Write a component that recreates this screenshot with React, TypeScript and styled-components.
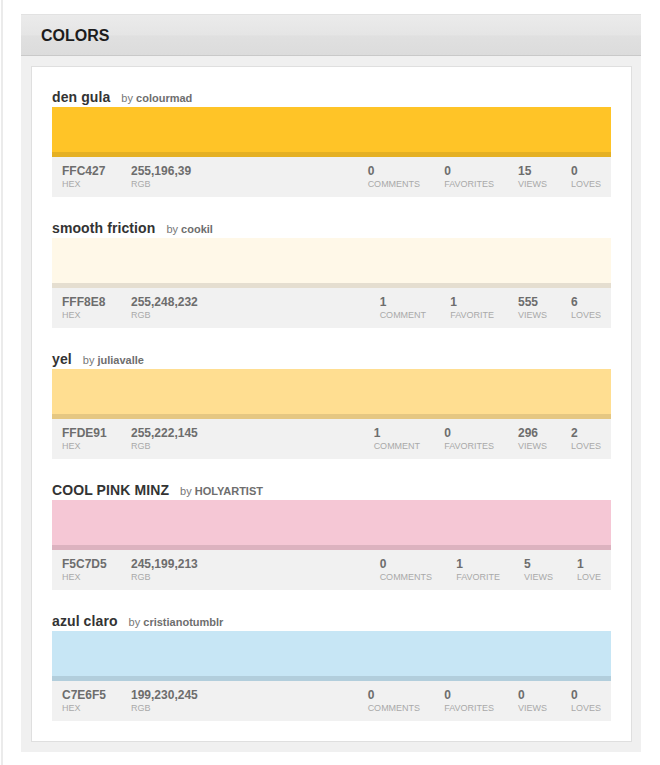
import React from "react";
import styled, { createGlobalStyle } from "styled-components";

const GlobalStyle = createGlobalStyle`
  html, body { margin: 0; padding: 0; background: #fff; }
  body { font-family: "Liberation Sans", Arial, Helvetica, sans-serif; }
`;

const Page = styled.div`
  min-height: 765px;
  box-sizing: border-box;
  padding: 15px 19px 0 21px;
  background: linear-gradient(to right, #fff 1px, #ebebeb 1px, #ebebeb 3px, #fff 3px);
`;

const Panel = styled.section`
  background: #f0f0f0;
  padding-bottom: 10px;
`;

const PanelHeader = styled.header`
  height: 40px;
  line-height: 41px;
  padding-left: 20px;
  border-top: 1px solid #e2e2e2;
  border-bottom: 1px solid #c9c9c9;
  background: linear-gradient(#ebebeb 0%, #e5e5e5 50%, #e0e0e0 52%, #dcdcdc 100%);
  font-size: 16px;
  font-weight: bold;
  color: #1c1c1c;
  margin-top: -1px;
`;

const Card = styled.div`
  margin: 10px 9px 0 10px;
  background: #fff;
  border: 1px solid #dfdfdf;
  padding: 21px 20px 20px 20px;
  display: flex;
  flex-direction: column;
  gap: 22px;
`;

const Entry = styled.article`
  display: flex;
  flex-direction: column;
`;

const TitleRow = styled.div`
  display: flex;
  align-items: baseline;
  gap: 11px;
  height: 18px;
  line-height: 18px;
  margin-bottom: 1px;
`;

const Title = styled.span`
  font-size: 14px;
  font-weight: bold;
  color: #333;
  letter-spacing: 0.1px;
`;

const Author = styled.span`
  font-size: 11px;
  color: #777;
  b { font-weight: bold; color: #6e6e6e; }
`;

const Swatch = styled.div<{ $color: string }>`
  height: 45px;
  background: ${(p) => p.$color};
  border-bottom: 5px solid rgba(0, 0, 0, 0.1);
`;

const Info = styled.div`
  height: 40px;
  box-sizing: border-box;
  background: #f1f1f1;
  padding: 7px 10px 0 10px;
  display: flex;
`;

const Field = styled.div<{ $width?: number }>`
  display: flex;
  flex-direction: column;
  ${(p) => (p.$width ? `width: ${p.$width}px;` : "")}
`;

const Value = styled.span`
  font-size: 12px;
  line-height: 14px;
  font-weight: bold;
  color: #6d6d6d;
`;

const Label = styled.span`
  font-size: 9px;
  line-height: 11px;
  margin-top: 1px;
  text-transform: uppercase;
  color: #a9a9a9;
`;

const Stats = styled.div`
  margin-left: auto;
  display: flex;
  gap: 24px;
`;

type ColorItem = {
  title: string;
  author: string;
  hex: string;
  rgb: string;
  stats: [number, string][];
};

const colors: ColorItem[] = [
  {
    title: "den gula",
    author: "colourmad",
    hex: "FFC427",
    rgb: "255,196,39",
    stats: [[0, "Comments"], [0, "Favorites"], [15, "Views"], [0, "Loves"]],
  },
  {
    title: "smooth friction",
    author: "cookil",
    hex: "FFF8E8",
    rgb: "255,248,232",
    stats: [[1, "Comment"], [1, "Favorite"], [555, "Views"], [6, "Loves"]],
  },
  {
    title: "yel",
    author: "juliavalle",
    hex: "FFDE91",
    rgb: "255,222,145",
    stats: [[1, "Comment"], [0, "Favorites"], [296, "Views"], [2, "Loves"]],
  },
  {
    title: "COOL PINK MINZ",
    author: "HOLYARTIST",
    hex: "F5C7D5",
    rgb: "245,199,213",
    stats: [[0, "Comments"], [1, "Favorite"], [5, "Views"], [1, "Love"]],
  },
  {
    title: "azul claro",
    author: "cristianotumblr",
    hex: "C7E6F5",
    rgb: "199,230,245",
    stats: [[0, "Comments"], [0, "Favorites"], [0, "Views"], [0, "Loves"]],
  },
];

export default function App() {
  return (
    <>
      <GlobalStyle />
      <Page>
        <Panel>
          <PanelHeader>COLORS</PanelHeader>
          <Card>
            {colors.map((c) => (
              <Entry key={c.hex}>
                <TitleRow>
                  <Title>{c.title}</Title>
                  <Author>
                    by <b>{c.author}</b>
                  </Author>
                </TitleRow>
                <Swatch $color={`#${c.hex}`} />
                <Info>
                  <Field $width={69}>
                    <Value>{c.hex}</Value>
                    <Label>Hex</Label>
                  </Field>
                  <Field>
                    <Value>{c.rgb}</Value>
                    <Label>RGB</Label>
                  </Field>
                  <Stats>
                    {c.stats.map(([n, l]) => (
                      <Field key={l}>
                        <Value>{n}</Value>
                        <Label>{l}</Label>
                      </Field>
                    ))}
                  </Stats>
                </Info>
              </Entry>
            ))}
          </Card>
        </Panel>
      </Page>
    </>
  );
}
